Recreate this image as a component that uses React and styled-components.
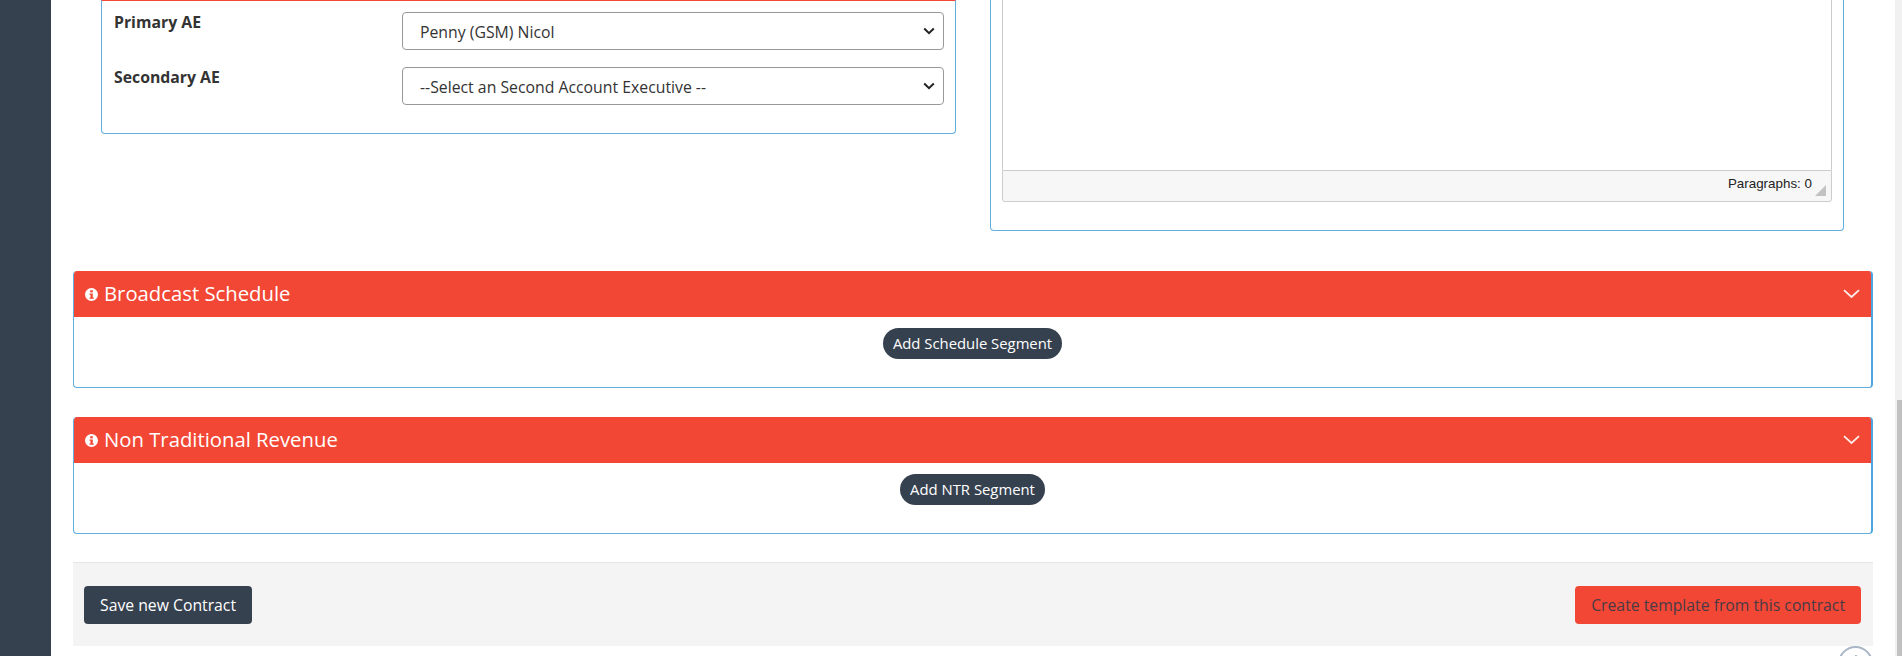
import React from 'react';
import styled, {createGlobalStyle} from 'styled-components';

const Global = createGlobalStyle`
    html, body {
        margin: 0;
        padding: 0;
        height: 656px;
        overflow: hidden;
        background: #fff;
        font-family: "Open Sans", sans-serif;
    }
    * { box-sizing: border-box; }
`;

const Page = styled.div`
    display: flex;
    width: 1902px;
    height: 656px;
    overflow: hidden;
    position: relative;
`;

const Sidebar = styled.div`
    width: 51px;
    flex: none;
    background-color: #364150;
`;

const Main = styled.div`
    width: 1844px;
    flex: none;
    padding: 0 22px;
`;

const Columns = styled.div`
    display: flex;
    align-items: flex-start;
    height: 271px;
    padding-left: 28px;
`;

const LeftPanel = styled.div`
    width: 855px;
    height: 134px;
    flex: none;
    background: #fff;
    border: 1px solid #62aede;
    border-top: 1px solid #f34735;
    border-radius: 0 0 4px 4px;
    padding: 11px 11px 0 12px;
`;

const FieldRow = styled.div`
    display: flex;
    margin-bottom: 17px;
`;

const FieldLabel = styled.label`
    width: 288px;
    flex: none;
    font-size: 15.8px;
    font-weight: 700;
    line-height: 20px;
    color: #333;
`;

const SelectWrap = styled.div`
    position: relative;
    flex: none;
    width: 542px;
    height: 38px;
`;

const Select = styled.select`
    appearance: none;
    width: 100%;
    height: 100%;
    padding: 2px 17px 0;
    border: 1px solid #999;
    border-radius: 4px;
    background: #fff;
    font-family: "Open Sans", sans-serif;
    font-size: 15.8px;
    color: #333;
`;

const SelectArrow = styled.svg`
    position: absolute;
    right: 9px;
    top: 15px;
    pointer-events: none;
`;

const RightPanel = styled.div`
    width: 854px;
    height: 231px;
    margin-left: 34px;
    flex: none;
    border: 1px solid #62aede;
    border-top: none;
    border-radius: 0 0 4px 4px;
    padding: 0 11px;
`;

const EditorBody = styled.div`
    height: 170px;
    border-left: 1px solid #ccc;
    border-right: 1px solid #ccc;
`;

const StatusBar = styled.div`
    height: 32px;
    position: relative;
    background: #f7f7f7;
    border: 1px solid #ccc;
    border-radius: 0 0 3px 3px;
    padding: 5px 19px 0 0;
    font-family: "Liberation Sans", sans-serif;
    font-size: 13.4px;
    line-height: 16px;
    color: #222;
    text-align: right;
`;

const ResizeGrip = styled.div`
    position: absolute;
    right: 5px;
    bottom: 5px;
    width: 0;
    height: 0;
    border-left: 11px solid transparent;
    border-bottom: 11px solid #c2c2c2;
`;

const Section = styled.section`
    height: 117px;
    margin-bottom: ${props => props.$gap}px;
    border: 1px solid #62aede;
    border-top: none;
    border-right: 2px solid #4ea5e0;
    border-radius: 4px;
    overflow: hidden;
`;

const SectionHeader = styled.div`
    height: 46px;
    background-color: #f34735;
    display: flex;
    align-items: center;
    justify-content: space-between;
    padding: 0 11px;
    color: #fff;
    font-size: 20.3px;
`;

const SectionTitle = styled.div`
    display: flex;
    align-items: center;
    gap: 6px;
`;

const TitleText = styled.span`
    padding-bottom: 2px;
`;

const SectionBody = styled.div`
    display: flex;
    justify-content: center;
    padding-top: 11px;
`;

const PillButton = styled.button`
    height: 31px;
    border: none;
    border-radius: 16px;
    padding: 0 10px 2px;
    background-color: #364150;
    color: #fff;
    font-family: "Open Sans", sans-serif;
    font-size: 14.85px;
    white-space: nowrap;
`;

const Footer = styled.div`
    height: 84px;
    background-color: #f4f4f4;
    border-top: 1px solid #e5e5e5;
    display: flex;
    align-items: center;
    justify-content: space-between;
    padding: 0 12px 0 11px;
`;

const FooterButton = styled.button`
    height: 38px;
    border: none;
    border-radius: 4px;
    padding: 0 16px;
    background-color: ${props => props.$danger ? '#f34735' : '#364150'};
    color: ${props => props.$danger ? '#4a3a45' : '#fff'};
    font-family: "Open Sans", sans-serif;
    font-size: 15.75px;
    white-space: nowrap;
`;

const HelpCircle = styled.div`
    position: absolute;
    left: 1838px;
    top: 646px;
    width: 35px;
    height: 35px;
    border-radius: 50%;
    border: 2px solid #a9b6c6;
    background: #fff;
    display: flex;
    justify-content: center;
    padding-top: 7px;
`;

const HelpMark = styled.div`
    width: 2px;
    height: 2px;
    background: #a9b6c6;
`;

const ScrollTrack = styled.div`
    position: absolute;
    top: 0;
    right: 0;
    width: 7px;
    height: 656px;
    background: #f1f1f1;
`;

const ScrollThumb = styled.div`
    position: absolute;
    right: 0;
    top: 400px;
    width: 5px;
    height: 256px;
    background: #c1c1c1;
`;

const InfoIcon = () => (
    <svg width="13" height="13" viewBox="0 0 13 13">
        <circle cx="6.5" cy="6.5" r="6.5" fill="#fff" />
        <rect x="5.2" y="2.2" width="2.6" height="2.2" fill="#f34735" />
        <path d="M4.5 5.4h3.3v4h1v1.3H4.5V9.4h1V6.7h-1z" fill="#f34735" />
    </svg>
);

const ChevronDown = () => (
    <svg width="17" height="10" viewBox="0 0 17 10">
        <path d="M1 1.2L8.5 8l7.5-6.8" fill="none" stroke="#fff" strokeWidth="1.8" opacity="0.9" />
    </svg>
);

const AccordionSection = ({title, action, gap}) => (
    <Section $gap={gap}>
        <SectionHeader>
            <SectionTitle><InfoIcon /><TitleText>{title}</TitleText></SectionTitle>
            <ChevronDown />
        </SectionHeader>
        <SectionBody>
            <PillButton>{action}</PillButton>
        </SectionBody>
    </Section>
);

const AeSelect = ({label, value}) => (
    <FieldRow>
        <FieldLabel>{label}</FieldLabel>
        <SelectWrap>
            <Select defaultValue={value}>
                <option value={value}>{value}</option>
            </Select>
            <SelectArrow width="12" height="8" viewBox="0 0 12 8">
                <path d="M1.2 1.5L6 6.2l4.8-4.7" fill="none" stroke="#222" strokeWidth="2" />
            </SelectArrow>
        </SelectWrap>
    </FieldRow>
);

const App = () => {
    return <Page>
        <Global />
        <Sidebar />
        <Main>
            <Columns>
                <LeftPanel>
                    <AeSelect label="Primary AE" value="Penny (GSM) Nicol" />
                    <AeSelect label="Secondary AE" value="--Select an Second Account Executive --" />
                </LeftPanel>
                <RightPanel>
                    <EditorBody />
                    <StatusBar>
                        Paragraphs: 0
                        <ResizeGrip />
                    </StatusBar>
                </RightPanel>
            </Columns>
            <AccordionSection title="Broadcast Schedule" action="Add Schedule Segment" gap={29} />
            <AccordionSection title="Non Traditional Revenue" action="Add NTR Segment" gap={28} />
            <Footer>
                <FooterButton>Save new Contract</FooterButton>
                <FooterButton $danger>Create template from this contract</FooterButton>
            </Footer>
        </Main>
        <HelpCircle><HelpMark /></HelpCircle>
        <ScrollTrack />
        <ScrollThumb />
    </Page>
}

export default App;
